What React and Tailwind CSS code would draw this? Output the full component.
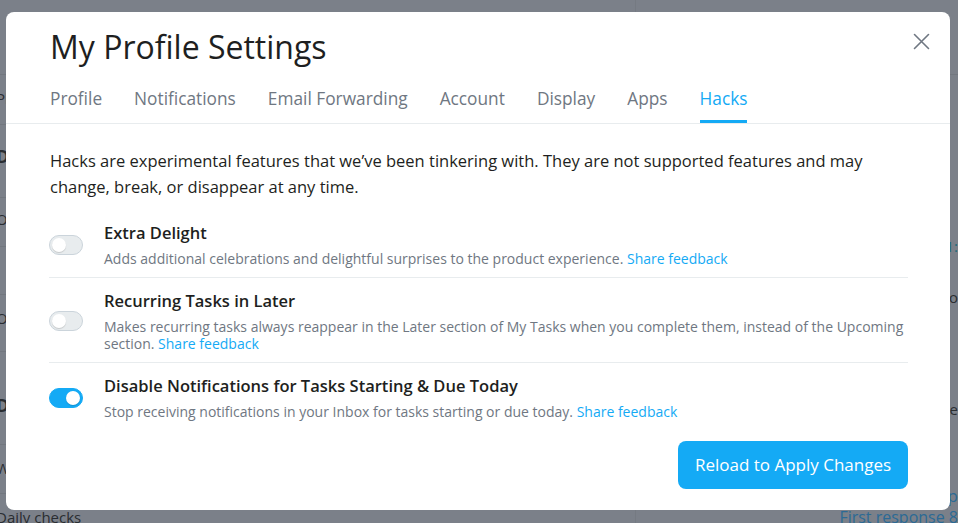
import { useState } from 'react'

const TABS = ['Profile', 'Notifications', 'Email Forwarding', 'Account', 'Display', 'Apps', 'Hacks']

const HACKS = [
  {
    id: 'delight',
    title: 'Extra Delight',
    desc: 'Adds additional celebrations and delightful surprises to the product experience.',
    on: false,
  },
  {
    id: 'recurring',
    title: 'Recurring Tasks in Later',
    desc: 'Makes recurring tasks always reappear in the Later section of My Tasks when you complete them, instead of the Upcoming section.',
    on: false,
  },
  {
    id: 'notifs',
    title: 'Disable Notifications for Tasks Starting & Due Today',
    desc: 'Stop receiving notifications in your Inbox for tasks starting or due today.',
    on: true,
  },
]

function Toggle({ on, onChange }) {
  return (
    <button
      onClick={onChange}
      className={`shrink-0 w-[34px] h-[20px] rounded-full border flex items-center px-[2px] ${
        on ? 'bg-[#14aaf5] border-[#14aaf5] justify-end' : 'bg-[#e8ecee] border-[#cbd4db] justify-start'
      }`}
    >
      <span className="size-[14px] rounded-full bg-white shadow-[0_1px_1px_rgba(0,0,0,0.15)]" />
    </button>
  )
}

function HackRow({ hack, on, onToggle, last }) {
  return (
    <div className={`flex items-center gap-[21px] pt-[12px] pb-[10px] ${last ? '' : 'border-b border-[#e8ecee]'}`}>
      <Toggle on={on} onChange={onToggle} />
      <div className="flex-1 min-w-0 -mr-[6px]">
        <p className="text-[16.5px] leading-[22px] font-semibold text-[#1e1f21]">{hack.title}</p>
        <p className="mt-[6px] text-[14px] leading-[17px] text-[#6f7782]">
          {hack.desc} <a className="text-[#14aaf5]">Share feedback</a>
        </p>
      </div>
    </div>
  )
}

function XIcon() {
  return (
    <svg width="17" height="17" viewBox="0 0 17 17" fill="none" stroke="#6f7782" strokeWidth="1.6" strokeLinecap="round">
      <path d="M1.5 1.5 L15.5 15.5 M15.5 1.5 L1.5 15.5" />
    </svg>
  )
}

export default function App() {
  const [state, setState] = useState(() => Object.fromEntries(HACKS.map(h => [h.id, h.on])))

  return (
    <div className="relative h-[523px] w-[958px] overflow-hidden bg-[#7b8089] font-['Open_Sans',sans-serif]">
      {/* dimmed page behind the modal */}
      <div className="flex flex-col h-full">
        <div className="h-[3px] bg-[#71767e] flex">
          <div className="ml-[37px] w-[60px] bg-[#2f6f9c]" />
        </div>
        <div className="flex-1 flex">
          <div className="w-[640px] border-r border-[#757a82] flex flex-col text-[#2a2d31] text-[15px] -ml-[4px]">
            <div className="h-[75px] border-b border-[#72777f]" />
            <div className="h-[50px] border-b border-[#72777f] pt-[12px]">Plan</div>
            <div className="h-[73px] border-b border-[#72777f] pt-[18px] font-bold text-[18px]">Do</div>
            <div className="h-[49px] border-b border-[#72777f] pt-[10px]">O</div>
            <div className="h-[48px] border-b border-[#72777f]" />
            <div className="h-[57px] border-b border-[#72777f] pt-[12px]">O</div>
            <div className="h-[93px] border-b border-[#72777f] pt-[40px] font-bold text-[18px]">Do</div>
            <div className="h-[49px] border-b border-[#72777f] pt-[12px]">Weekly</div>
            <div className="pt-[12px]">Daily checks</div>
          </div>
          <div className="flex-1 flex flex-col items-end text-[15px] text-[#2a2d31]">
            <div className="w-full h-[75px] border-b border-[#72777f]" />
            <div className="mt-[160px] text-[#1d6a7a]">11:</div>
            <div className="mt-[28px]">ro</div>
            <div className="mt-[90px]">e</div>
            <div className="mt-[62px] text-[#2b6a95] text-[17px]">p</div>
            <div className="text-[#2b6a95] text-[16px] leading-[18px]">First response 8</div>
          </div>
        </div>
      </div>

      {/* modal */}
      <div className="absolute left-[6px] top-[12px] w-[944px] h-[498px] bg-white rounded-[8px] flex flex-col">
        <div className="relative px-[44px] pt-[15px]">
          <h1 className="text-[32px] leading-[40px] text-[#1e1f21]">My Profile Settings</h1>
          <button className="absolute right-[20px] top-[21px]">
            <XIcon />
          </button>
        </div>
        <div className="mt-[20px] px-[44px] flex gap-[32px] border-b border-[#e8ecee]">
          {TABS.map(t => (
            <div
              key={t}
              className={`text-[17.3px] leading-[24px] pb-[9px] border-b-[3px] ${
                t === 'Hacks' ? 'text-[#14aaf5] border-[#14aaf5]' : 'text-[#6f7782] border-transparent'
              }`}
            >
              {t}
            </div>
          ))}
        </div>

        <div className="flex-1 flex flex-col pl-[43px] pr-[42px] pt-[24px] pb-[21px]">
          <p className="pl-[1px] text-[16.5px] leading-[26px] text-[#1e1f21]">
            Hacks are experimental features that we’ve been tinkering with. They are not supported features and may change, break, or disappear at any time.
          </p>
          <div className="mt-[10px] flex flex-col">
            {HACKS.map((h, i) => (
              <HackRow
                key={h.id}
                hack={h}
                on={state[h.id]}
                last={i === HACKS.length - 1}
                onToggle={() => setState(s => ({ ...s, [h.id]: !s[h.id] }))}
              />
            ))}
          </div>
          <div className="mt-auto flex justify-end">
            <button className="h-[48px] w-[230px] rounded-[8px] bg-[#14aaf5] text-white text-[17px]">
              Reload to Apply Changes
            </button>
          </div>
        </div>
      </div>
    </div>
  )
}
